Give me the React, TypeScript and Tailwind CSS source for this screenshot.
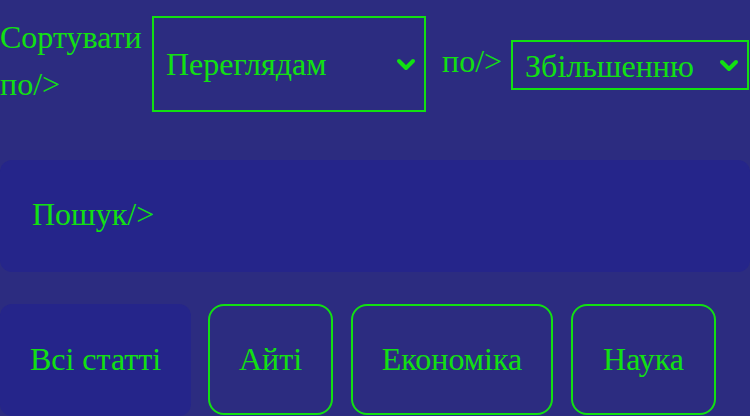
import React from "react";

const Chevron = () => (
  <svg width="20" height="14" viewBox="0 0 20 14" className="pointer-events-none absolute right-[8px] top-1/2 -translate-y-1/2">
    <polyline points="3,4 10,11 17,4" fill="none" stroke="#12e012" strokeWidth="4" strokeLinecap="round" strokeLinejoin="round" />
  </svg>
);

export default function App() {
  const font = { fontFamily: '"Liberation Serif", "DejaVu Serif", serif' };
  return (
    <div className="w-[750px] h-[416px] overflow-hidden bg-[#2c2c80] text-[#12e012] text-[32px]" style={font}>
      <div className="flex items-start pt-[14px]">
        <div className="w-[142px] leading-[47px]">Сортувати по/&gt;</div>
        <div className="relative ml-[10px] mt-[2px] w-[274px] h-[96px] shrink-0 border-2 border-[#12e012] flex items-center">
          <select className="appearance-none bg-transparent w-full h-full pl-[12px] outline-none" style={font}>
            <option>Переглядам</option>
          </select>
          <Chevron />
        </div>
        <div className="ml-[16px] mt-[24px] leading-[47px] h-[47px] shrink-0">по/&gt;</div>
        <div className="relative ml-[9px] mt-[26px] w-[238px] h-[50px] shrink-0 border-2 border-[#12e012] flex items-center">
          <select className="appearance-none bg-transparent w-full h-full pl-[12px] outline-none" style={font}>
            <option>Збільшенню</option>
          </select>
          <Chevron />
        </div>
      </div>
      <div className="mt-[48px] h-[112px] rounded-[12px] bg-[#25258a] flex items-center pl-[32px] pb-[4px]">
        Пошук/&gt;
      </div>
      <div className="mt-[32px] flex">
        <div className="h-[112px] w-[191px] rounded-[12px] bg-[#25258a] flex items-center justify-center pb-[2px]">Всі статті</div>
        <div className="ml-[17px] h-[111px] w-[125px] rounded-[16px] border-2 border-[#12e012] flex items-center justify-center pb-[2px]">Айті</div>
        <div className="ml-[18px] h-[111px] w-[202px] rounded-[16px] border-2 border-[#12e012] flex items-center justify-center pb-[2px]">Економіка</div>
        <div className="ml-[18px] h-[111px] w-[145px] rounded-[16px] border-2 border-[#12e012] flex items-center justify-center pb-[2px]">Наука</div>
      </div>
    </div>
  );
}
